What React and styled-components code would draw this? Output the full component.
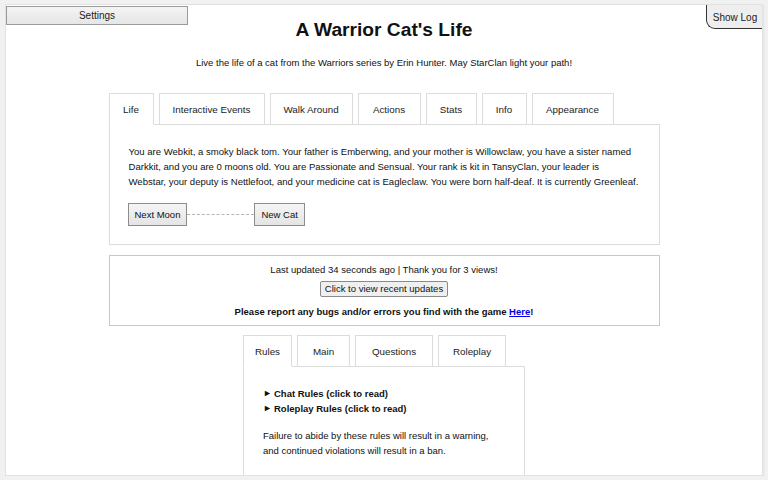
import React from "react";
import styled, { createGlobalStyle } from "styled-components";

const GlobalStyle = createGlobalStyle`
  html, body {
    margin: 0;
    padding: 0;
    background: #f1f1f1;
    font-family: "Liberation Sans", Arial, sans-serif;
    color: #111;
  }
`;

const lifeTabs = [
  { label: "Life", width: 45 },
  { label: "Interactive Events", width: 106 },
  { label: "Walk Around", width: 83 },
  { label: "Actions", width: 63 },
  { label: "Stats", width: 51 },
  { label: "Info", width: 45 },
  { label: "Appearance", width: 82 },
];

const chatTabs = [
  { label: "Rules", width: 49 },
  { label: "Main", width: 53 },
  { label: "Questions", width: 78 },
  { label: "Roleplay", width: 68 },
];

const storyLines = [
  "You are Webkit, a smoky black tom. Your father is Emberwing, and your mother is Willowclaw, you have a sister named",
  "Darkkit, and you are 0 moons old. You are Passionate and Sensual. Your rank is kit in TansyClan, your leader is",
  "Webstar, your deputy is Nettlefoot, and your medicine cat is Eagleclaw. You were born half-deaf. It is currently Greenleaf.",
];

function Tabs({ items, active }) {
  return (
    <TabRow>
      {items.map((item) => (
        <Tab
          key={item.label}
          $active={item.label === active}
          $width={item.width}
        >
          {item.label}
        </Tab>
      ))}
    </TabRow>
  );
}

export default function App() {
  return (
    <>
      <GlobalStyle />
      <Page>
        <SettingsButton>Settings</SettingsButton>
        <LogButton>Show Log</LogButton>
        <Title>A Warrior Cat's Life</Title>
        <Subtitle>
          Live the life of a cat from the Warriors series by Erin Hunter. May
          StarClan light your path!
        </Subtitle>

        <Section $width={551} $gap={24}>
          <Tabs items={lifeTabs} active="Life" />
          <Panel>
            <Story>
              {storyLines.map((line, i) => (
                <StoryLine key={i}>{line}</StoryLine>
              ))}
            </Story>
            <ButtonRow>
              <GameButton>Next Moon</GameButton>
              <Connector />
              <GameButton>New Cat</GameButton>
            </ButtonRow>
          </Panel>
        </Section>

        <UpdateBox>
          <UpdateLine>Last updated 34 seconds ago | Thank you for 3 views!</UpdateLine>
          <SmallButton>Click to view recent updates</SmallButton>
          <ReportLine>
            Please report any bugs and/or errors you find with the game{" "}
            <a href="#bugs">Here</a>!
          </ReportLine>
        </UpdateBox>

        <Section $width={282} $gap={9}>
          <Tabs items={chatTabs} active="Rules" />
          <ChatPanel>
            <Summary>Chat Rules (click to read)</Summary>
            <Summary>Roleplay Rules (click to read)</Summary>
            <Note>
              Failure to abide by these rules will result in a warning, and
              continued violations will result in a ban.
            </Note>
          </ChatPanel>
        </Section>
      </Page>
    </>
  );
}

const Page = styled.div`
  position: relative;
  box-sizing: border-box;
  margin: 4px 5px 0 5px;
  height: 472px;
  overflow: hidden;
  background: #fff;
  border: 1px solid #e2e2e2;
  box-shadow: 1px 1px 2px rgba(0, 0, 0, 0.06);
  display: flex;
  flex-direction: column;
  align-items: center;

  & > * {
    flex-shrink: 0;
  }
`;

const SettingsButton = styled.button`
  position: absolute;
  top: 1px;
  left: 0;
  width: 182px;
  height: 19px;
  padding: 0;
  font-family: inherit;
  font-size: 10px;
  color: #222;
  background: linear-gradient(#f4f4f4, #e6e6e6);
  border: 1px solid #9a9a9a;
  border-radius: 0;
`;

const LogButton = styled.button`
  position: absolute;
  top: -1px;
  right: -1px;
  width: 57px;
  height: 25px;
  padding: 2px 0 0 0;
  font-family: inherit;
  font-size: 10px;
  color: #222;
  background: #eeeeee;
  border: none;
  border-left: 1px solid #333;
  border-bottom: 1px solid #333;
  border-bottom-left-radius: 9px;
`;

const Title = styled.h1`
  margin: 13px 0 0 0;
  font-size: 19.2px;
  line-height: 24px;
  font-weight: bold;
`;

const Subtitle = styled.p`
  margin: 15px 0 0 0;
  font-size: 9.5px;
  line-height: 12px;
`;

const Section = styled.div`
  width: ${(p) => p.$width}px;
  margin-top: ${(p) => p.$gap}px;
`;

const TabRow = styled.div`
  display: flex;
  gap: 5px;
  position: relative;
  z-index: 1;
  margin-bottom: -1px;
`;

const Tab = styled.div`
  box-sizing: border-box;
  width: ${(p) => p.$width}px;
  height: 32px;
  display: flex;
  align-items: center;
  justify-content: center;
  font-size: 9.8px;
  color: #222;
  background: #fff;
  border: 1px solid #dcdcdc;
  border-bottom-color: ${(p) => (p.$active ? "#fff" : "#dcdcdc")};
`;

const Panel = styled.div`
  box-sizing: border-box;
  height: 121px;
  padding: 19px 8px 0 19px;
  border: 1px solid #dcdcdc;
`;

const Story = styled.p`
  margin: 0;
  font-size: 9.55px;
  line-height: 15px;
`;

const StoryLine = styled.span`
  display: block;
  white-space: nowrap;
`;

const ButtonRow = styled.div`
  display: flex;
  align-items: center;
  margin-top: 14px;
  margin-left: -1px;
`;

const GameButton = styled.button`
  box-sizing: border-box;
  height: 23px;
  padding: 0 6px;
  font-family: inherit;
  font-size: 9.5px;
  color: #111;
  background: linear-gradient(#f5f5f5, #e4e4e4);
  border: 1px solid #8c8c8c;
  border-radius: 0;
`;

const Connector = styled.div`
  width: 67px;
  border-top: 1px dashed #b5b5b5;
`;

const UpdateBox = styled.div`
  box-sizing: border-box;
  width: 551px;
  height: 71px;
  margin-top: 10px;
  padding-top: 7px;
  border: 1px solid #c8c8c8;
  display: flex;
  flex-direction: column;
  align-items: center;
  font-size: 9.5px;
`;

const UpdateLine = styled.div`
  line-height: 13px;
`;

const SmallButton = styled.button`
  margin-top: 5px;
  height: 16px;
  padding: 0 4px;
  font-family: inherit;
  font-size: 9.5px;
  line-height: 12px;
  color: #111;
  background: #efefef;
  border: 1px solid #8a8a8a;
  border-radius: 2px;
`;

const ReportLine = styled.div`
  margin-top: 8px;
  font-weight: bold;
  line-height: 13px;

  a {
    color: #0000ee;
  }
`;

const ChatPanel = styled.div`
  box-sizing: border-box;
  height: 200px;
  padding: 19px 19px 0 19px;
  border: 1px solid #dcdcdc;
  font-size: 9.5px;
`;

const Summary = styled.div`
  display: flex;
  align-items: center;
  height: 15px;
  font-weight: bold;

  &::before {
    content: "►";
    width: 11px;
    font-size: 9px;
    line-height: 1;
  }
`;

const Note = styled.p`
  margin: 12px 0 0 0;
  line-height: 15px;
`;
